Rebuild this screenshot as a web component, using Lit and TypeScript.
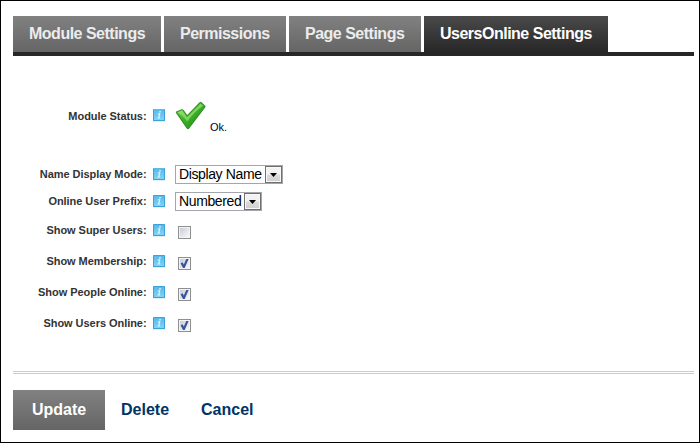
import { LitElement, html, css, svg } from "lit";
import { customElement, property } from "lit/decorators.js";
import { classMap } from "lit/directives/class-map.js";

@customElement("info-icon")
class InfoIcon extends LitElement {
  @property({ type: Boolean }) cut = false;
  static styles = css`
    :host { display: block; width: 12px; height: 13px; }
    svg { display: block; }
  `;
  render() {
    return html`<svg width="12" height="13" viewBox="0 0 12 13">
      <defs><linearGradient id="g" x1="0" y1="0" x2="0" y2="1">
        <stop offset="0" stop-color="#58b9ec"></stop><stop offset="1" stop-color="#7ed3f5"></stop>
      </linearGradient></defs>
      <rect x="0" y="12" width="12" height="1" fill="#e3eef4"></rect>
      <rect x="0" y="0" width="12" height="12" rx=".6" fill="#3ba3dc"></rect>
      <rect x="1" y="1" width="10" height="10" fill="url(#g)"></rect>
      ${this.cut ? svg`<rect x="1" y="0" width="10" height="1" fill="#5dbbea"></rect>` : ""}
      <path d="M6.4 2.1h1.5l-.3 1.3H6.1zM4.8 4.3h2.6L6.5 8.5h.8l-.2.9H4.4l.2-.9h.6l.7-3.2h-1.3z" fill="#e0f4fd"></path>
    </svg>`;
  }
}

@customElement("check-box")
class CheckBox extends LitElement {
  @property({ type: Boolean }) checked = false;
  static styles = css`
    :host { display: block; width: 13px; height: 13px; }
    svg { display: block; }
  `;
  render() {
    return html`<svg width="13" height="13" viewBox="0 0 13 13">
      <defs><linearGradient id="b" x1="0" y1="0" x2="1" y2="1">
        <stop offset="0" stop-color="#c9ced5"></stop><stop offset="1" stop-color="#f8f8f8"></stop>
      </linearGradient></defs>
      <rect width="13" height="13" fill="#8e8f8f"></rect>
      <rect x="1" y="1" width="11" height="11" fill="#f4f4f4"></rect>
      <rect x="2" y="2" width="9" height="9" fill="url(#b)"></rect>
      ${this.checked
        ? svg`<path d="M2.6 6.2 4.6 5.3 5.8 7.4 8.3 2H10.6L6.7 11H5z" fill="#3c529e"></path>`
        : ""}
    </svg>`;
  }
}

interface Row { label: string; kind: string; value?: string; on?: boolean; }

@customElement("app-root")
class AppRoot extends LitElement {
  static styles = css`
    :host {
      display: block; box-sizing: border-box; width: 700px; height: 443px;
      border: 1px solid #000; background: #fff; padding: 15px 5px 0 12px;
      font-family: "Liberation Sans", Arial, sans-serif; overflow: hidden;
    }
    .tabs { display: flex; gap: 3px; height: 36px; border-bottom: 4px solid #272727; }
    .tab {
      box-sizing: border-box; height: 36px; line-height: 35px; padding-left: 16px; white-space: nowrap;
      font-size: 16px; letter-spacing: -.5px; font-weight: bold; color: #ececec;
      background: linear-gradient(#818181, #656565);
    }
    .t0 { width: 148px; } .t1 { width: 122px; } .t2 { width: 132px; } .t3 { width: 184px; }
    .active { color: #fff; background: linear-gradient(#4a4a4a, #272727); }
    .form { padding-top: 53px; height: 262px; }
    .row { display: flex; align-items: flex-start; height: 31px; }
    .row.status { height: 59px; }
    .row.first { height: 27px; }
    .row.second { height: 29px; }
    .label {
      width: 133.5px; margin-right: 6.5px; text-align: right; white-space: nowrap;
      font-size: 11px; line-height: 13px; font-weight: bold; color: #333; letter-spacing: -.05px;
    }
    .status .label { padding-top: 1px; }
    info-icon { margin-right: 10px; }
    check-box { margin: 2px 0 0 3px; }
    .ok { display: flex; margin-top: -8px; }
    .ok svg { display: block; margin-right: 3px; }
    .ok span { font-size: 11px; line-height: 13px; margin-top: 20px; color: #003; }
    .select {
      display: flex; box-sizing: border-box; height: 19px; margin-top: -3px;
      border: 1px solid #a5a5ad; background: #fff;
    }
    .select span { font-size: 14px; letter-spacing: -.38px; line-height: 17px; padding-left: 3px; flex: 1; color: #000; white-space: nowrap; }
    .wide { width: 108px; } .narrow { width: 87px; }
    .arrow {
      box-sizing: border-box; width: 17px; height: 17px; border: 1px solid #707070;
      background: linear-gradient(#f2f2f2 0 48%, #dddddd 52%, #cfcfcf);
      box-shadow: inset 0 0 0 1px #f8f8f8;
    }
    .arrow svg { display: block; }
    .rule { height: 1px; border: solid #ccc; border-width: 1px 0; }
    .actions { display: flex; margin-top: 16px; font-size: 16px; font-weight: bold; line-height: 39px; color: #003366; }
    .actions div { white-space: nowrap; }
    .actions .update { width: 92px; height: 40px; text-align: center; color: #fff; background: linear-gradient(#818181, #656565); margin-right: 16px; }
    .delete { width: 80px; }
  `;

  private tabs = ["Module Settings", "Permissions", "Page Settings", "UsersOnline Settings"];
  private rows: Row[] = [
    { label: "Module Status:", kind: "status" },
    { label: "Name Display Mode:", kind: "first", value: "Display Name" },
    { label: "Online User Prefix:", kind: "second", value: "Numbered" },
    { label: "Show Super Users:", kind: "check", on: false },
    { label: "Show Membership:", kind: "check", on: true },
    { label: "Show People Online:", kind: "check", on: true },
    { label: "Show Users Online:", kind: "check", on: true },
  ];

  private control(r: Row) {
    if (r.kind === "status") {
      return html`<div class="ok">
        <svg width="32" height="30" viewBox="0 0 32 30">
          <defs><linearGradient id="c" x1="0" y1="0" x2="1" y2="1">
            <stop offset="0" stop-color="#8fdc62"></stop><stop offset=".45" stop-color="#3fb52c"></stop>
            <stop offset="1" stop-color="#178312"></stop>
          </linearGradient></defs>
          <path d="M1.2 10.6 6.6 8.2Q7.8 7.9 8.6 9L12.2 14 24.6 1.2Q25.6.3 26.6 1.3L30.3 4.7Q31 5.5 30.2 6.5L14.2 27.4Q12.9 29 11.5 27.3L1 12Q.5 11.1 1.2 10.6z" fill="#35912a"></path>
          <path d="M2.1 11.2 7.3 9.1 12.1 15.6 25.6 1.9 29.6 5.5 12.9 27z" fill="url(#c)"></path>
          <path d="M2.4 11.2 7.1 9.5 12 16.3 25.5 2.5 28 4.8Q18.5 11.5 12.2 20.6Q8.2 14.2 2.4 11.2z" fill="#a2e677" opacity=".65"></path>
        </svg><span>Ok.</span></div>`;
    }
    if (r.value) {
      return html`<div class="select ${r.kind === "first" ? "wide" : "narrow"}">
        <span>${r.value}</span>
        <div class="arrow"><svg width="15" height="15" viewBox="0 0 15 15"><path d="M4 6h7L7.5 10z" fill="#000"></path></svg></div>
      </div>`;
    }
    return html`<check-box ?checked=${r.on}></check-box>`;
  }

  render() {
    return html`
      <div class="tabs">
        ${this.tabs.map((t, i) => html`<div class="tab t${i} ${i === 3 ? "active" : ""}">${t}</div>`)}
      </div>
      <div class="form">
        ${this.rows.map((r) => html`<div class=${classMap({ row: true, [r.kind]: true })}>
          <div class="label">${r.label}</div>
          <info-icon ?cut=${r.kind === "status" || r.kind === "first"}></info-icon>
          ${this.control(r)}
        </div>`)}
      </div>
      <div class="rule"></div>
      <div class="actions">
        <div class="update">Update</div><div class="delete">Delete</div><div>Cancel</div>
      </div>`;
  }
}
